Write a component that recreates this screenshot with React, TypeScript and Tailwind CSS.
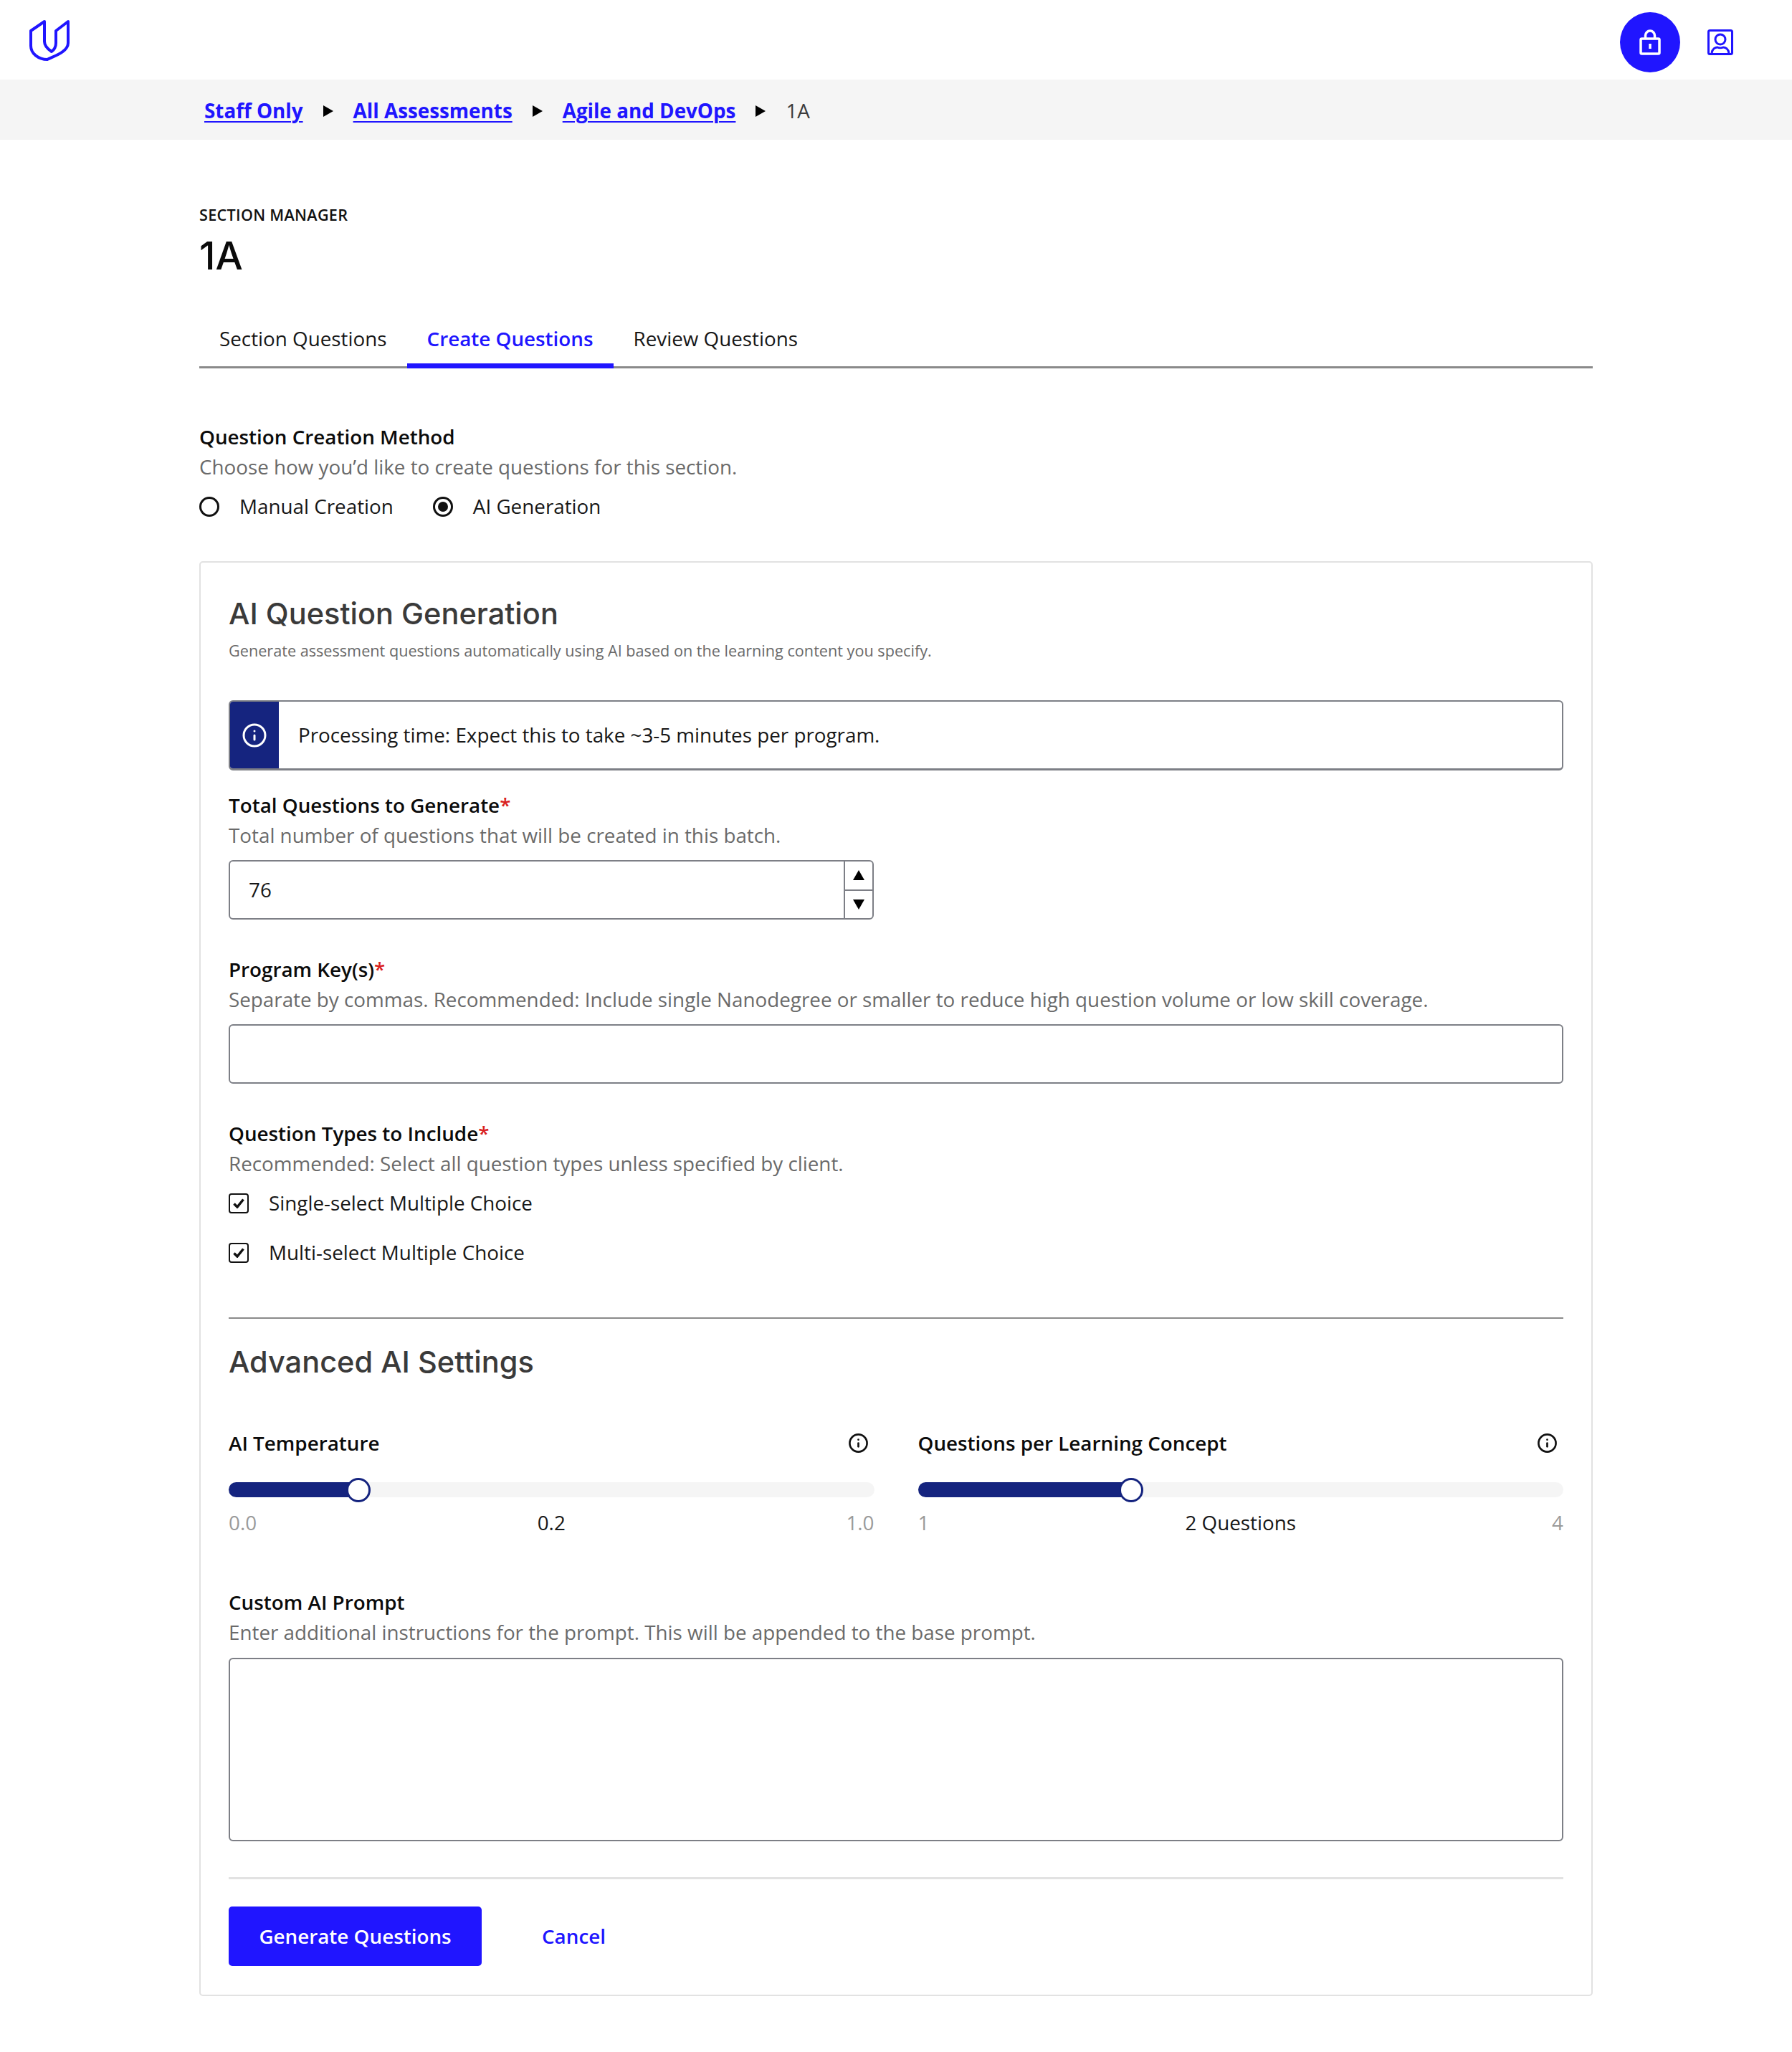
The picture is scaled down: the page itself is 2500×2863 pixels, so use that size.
import React from 'react';
import { Info } from 'lucide-react';

const Logo = () => (
  <svg width="56" height="58" viewBox="0 0 56 58" fill="none" stroke="#2015ff" strokeWidth="4" strokeLinejoin="round">
    <path d="M21 3 L2 16 V37 C2 48 13 56 25 56 C32 52 54 46 54 33 V3 L37 16 V33 C37 38 35 42 31 45 C25 41 21 37 21 31 Z" />
  </svg>
);

const LockIcon = () => (
  <svg width="30" height="36" viewBox="0 0 30 36" fill="none" stroke="#fff" strokeWidth="3.5" strokeLinejoin="round">
    <rect x="2" y="13" width="26" height="21" rx="1.5" />
    <path d="M8.5 13 V8.5 a6.5 6.5 0 0 1 13 0 V13" />
    <path d="M15 20 V27" />
  </svg>
);

const UserIcon = () => (
  <svg width="36" height="36" viewBox="0 0 36 36" fill="none" stroke="#2015ff" strokeWidth="3">
    <rect x="1.5" y="1.5" width="33" height="33" rx="2" />
    <circle cx="18" cy="14" r="7" />
    <path d="M6 33 C7 27 11 25 14 25 C16 26 20 26 22 25 C25 25 29 27 30 33" />
  </svg>
);

const Crumb = ({ children }: { children: React.ReactNode }) => (
  <>
    <a className="font-bold text-[#2015ff] underline underline-offset-4 decoration-2">{children}</a>
    <span className="mx-[28px] h-0 w-0 border-y-[8px] border-l-[14px] border-y-transparent border-l-black" />
  </>
);

const FieldLabel = ({ text, required }: { text: string; required?: boolean }) => (
  <div className="text-[27.8px] leading-[42px] font-semibold text-[#0b0b0b]">
    {text}
    {required && <span className="text-[#d92020]">*</span>}
  </div>
);

const FieldHint = ({ text }: { text: string }) => (
  <div className="text-[27.8px] leading-[42px] text-[#6a6a6a]">{text}</div>
);

const Checkbox = ({ label, className }: { label: string; className?: string }) => (
  <div className={`flex h-[42px] items-center gap-[28px] text-[27.8px] text-[#171717] ${className ?? ''}`}>
    <span className="flex h-[28px] w-[28px] items-center justify-center rounded-[4px] border-[2.5px] border-[#111]">
      <svg width="16" height="14" viewBox="0 0 16 14" fill="none" stroke="#111" strokeWidth="3.5">
        <path d="M1.5 7.5 L6 12 L14.5 1.5" />
      </svg>
    </span>
    {label}
  </div>
);

const Radio = ({ label, checked }: { label: string; checked?: boolean }) => (
  <div className="flex h-[42px] items-center gap-[28px] text-[27.8px] text-[#171717]">
    <span className="flex h-[28px] w-[28px] items-center justify-center rounded-full border-[3.5px] border-[#111]">
      {checked && <span className="h-[14px] w-[14px] rounded-full bg-[#111]" />}
    </span>
    {label}
  </div>
);

const Slider = ({
  label,
  percent,
  min,
  value,
  max,
}: {
  label: string;
  percent: number;
  min: string;
  value: string;
  max: string;
}) => (
  <div>
    <div className="flex items-center justify-between">
      <FieldLabel text={label} />
      <Info size={29} strokeWidth={2.2} className="mr-[8px] text-[#111]" />
    </div>
    <div className="relative mt-[34px] h-[21px] rounded-full bg-[#f5f5f5]">
      <div className="h-full rounded-full bg-[#15247f]" style={{ width: `${percent}%` }} />
      <span
        className="absolute top-1/2 h-[34px] w-[34px] -translate-x-1/2 -translate-y-1/2 rounded-full border-[3.5px] border-[#15247f] bg-white"
        style={{ left: `${percent}%` }}
      />
    </div>
    <div className="mt-[14px] flex justify-between text-[27.8px] leading-[42px] text-[#171717]">
      <span className="text-[#9a9a9a]">{min}</span>
      <span>{value}</span>
      <span className="text-[#9a9a9a]">{max}</span>
    </div>
  </div>
);

export default function App() {
  return (
    <div className="min-h-[2863px] bg-white font-['Open_Sans',sans-serif]">
      {/* Top bar */}
      <header className="flex h-[111px] items-center justify-between pl-[41px] pr-[82px]">
        <Logo />
        <div className="mt-[6px] flex items-center gap-[38px]">
          <span className="flex h-[84px] w-[84px] items-center justify-center rounded-full bg-[#2015ff]">
            <LockIcon />
          </span>
          <UserIcon />
        </div>
      </header>

      {/* Breadcrumb */}
      <nav className="flex h-[84px] items-center bg-[#f5f5f5] pt-[3px] pl-[285px] text-[27.8px]">
        <Crumb>Staff Only</Crumb>
        <Crumb>All Assessments</Crumb>
        <Crumb>Agile and DevOps</Crumb>
        <span className="text-[#3c3c3c]">1A</span>
      </nav>

      <main className="mx-[278px]">
        <div className="mt-[90px] text-[21.6px] leading-[30px] font-semibold tracking-[0.3px] text-[#111]">SECTION MANAGER</div>
        <h1 className="mt-[12px] font-['Inter',sans-serif] text-[54px] leading-[60px] font-medium text-[#0b0b0b]">1A</h1>

        {/* Tabs */}
        <div className="mt-[58px] flex h-[69px] border-b-[3px] border-[#8a8a8a] text-[27.8px]">
          <div className="px-[28px] pt-[7px] text-[#171717]">Section Questions</div>
          <div className="-mb-[3px] border-b-[7px] border-[#2015ff] px-[28px] pt-[7px] font-semibold text-[#2015ff]">Create Questions</div>
          <div className="px-[28px] pt-[7px] text-[#171717]">Review Questions</div>
        </div>

        <div className="mt-[74px]">
          <FieldLabel text="Question Creation Method" />
          <FieldHint text="Choose how you’d like to create questions for this section." />
          <div className="mt-[14px] flex gap-[55px]">
            <Radio label="Manual Creation" />
            <Radio label="AI Generation" checked />
          </div>
        </div>

        {/* AI card */}
        <section className="mt-[55px] rounded-[5px] border-2 border-[#e2e2e2] px-[39px] pt-[41px] pb-[40px]">
          <h2 className="font-['Inter',sans-serif] text-[41.5px] leading-[60px] font-medium text-[#3a3a3a]">AI Question Generation</h2>
          <p className="mt-[7px] text-[21.65px] leading-[30px] font-medium text-[#6a6a6a]">
            Generate assessment questions automatically using AI based on the learning content you specify.
          </p>

          <div className="mt-[54px] flex h-[98px] overflow-hidden rounded-[6px] border-2 border-b-[3px] border-[#7d7f86]">
            <div className="flex w-[68px] items-center justify-center bg-[#15247f]">
              <Info size={36} strokeWidth={2} className="text-white" />
            </div>
            <div className="flex items-center pl-[27px] text-[27.8px] text-[#171717]">
              Processing time: Expect this to take ~3-5 minutes per program.
            </div>
          </div>

          <div className="mt-[27px]">
            <FieldLabel text="Total Questions to Generate" required />
            <FieldHint text="Total number of questions that will be created in this batch." />
            <div className="mt-[14px] flex h-[83px] w-[900px] rounded-[6px] border-2 border-[#7d7f86]">
              <div className="flex flex-1 items-center pl-[26px] text-[27.8px] text-[#171717]">76</div>
              <div className="flex w-[40px] flex-col border-l-2 border-[#7d7f86]">
                <div className="flex flex-1 items-center justify-center border-b-2 border-[#7d7f86]">
                  <span className="h-0 w-0 border-x-[8px] border-b-[14px] border-x-transparent border-b-black" />
                </div>
                <div className="flex flex-1 items-center justify-center">
                  <span className="h-0 w-0 border-x-[8px] border-t-[14px] border-x-transparent border-t-black" />
                </div>
              </div>
            </div>
          </div>

          <div className="mt-[48px]">
            <FieldLabel text="Program Key(s)" required />
            <FieldHint text="Separate by commas. Recommended: Include single Nanodegree or smaller to reduce high question volume or low skill coverage." />
            <div className="mt-[14px] h-[83px] rounded-[6px] border-2 border-[#7d7f86]" />
          </div>

          <div className="mt-[48px]">
            <FieldLabel text="Question Types to Include" required />
            <FieldHint text="Recommended: Select all question types unless specified by client." />
            <Checkbox label="Single-select Multiple Choice" className="mt-[14px]" />
            <Checkbox label="Multi-select Multiple Choice" className="mt-[27px]" />
          </div>

          <hr className="mt-[69px] border-t-2 border-[#8a8a8a]" />

          <h2 className="mt-[30px] font-['Inter',sans-serif] text-[41.5px] leading-[60px] font-medium text-[#3a3a3a]">Advanced AI Settings</h2>

          <div className="mt-[62px] grid grid-cols-2 gap-[61px]">
            <Slider label="AI Temperature" percent={20.1} min="0.0" value="0.2" max="1.0" />
            <Slider label="Questions per Learning Concept" percent={33} min="1" value="2 Questions" max="4" />
          </div>

          <div className="mt-[69px]">
            <FieldLabel text="Custom AI Prompt" />
            <FieldHint text="Enter additional instructions for the prompt. This will be appended to the base prompt." />
            <div className="mt-[15px] h-[256px] rounded-[6px] border-2 border-[#7d7f86]" />
          </div>

          <hr className="mt-[50px] border-t-[3px] border-[#e2e2e2]" />

          <div className="mt-[38px] flex items-center gap-[84px]">
            <button className="h-[83px] w-[353px] rounded-[5px] bg-[#2015ff] text-[27.8px] font-semibold text-white">Generate Questions</button>
            <button className="text-[27.8px] font-semibold text-[#2015ff]">Cancel</button>
          </div>
        </section>
      </main>
    </div>
  );
}
